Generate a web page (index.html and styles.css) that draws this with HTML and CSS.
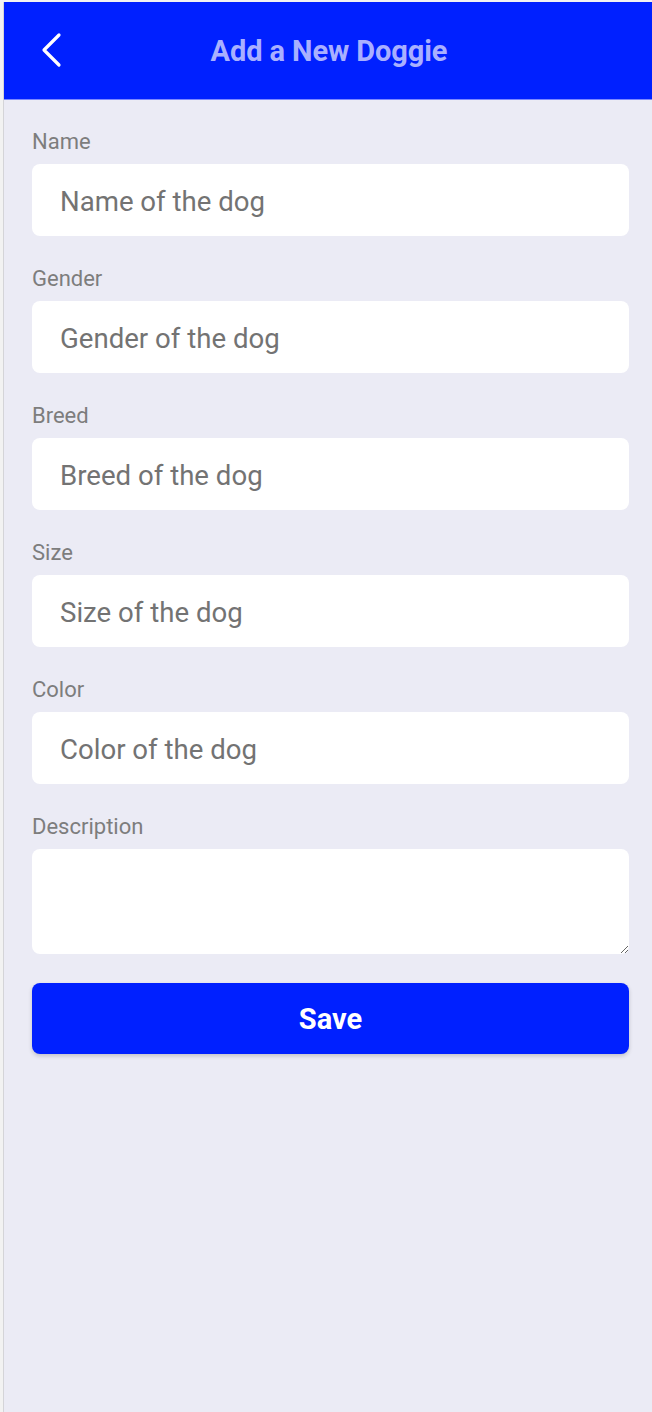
FILE: index.html
```html
<!DOCTYPE html>
<html lang="en">
<head>
<meta charset="utf-8">
<title>Add a New Doggie</title>
<link rel="stylesheet" href="styles.css">
</head>
<body>
<div class="app">
  <header class="topbar">
    <button class="back" aria-label="Back">
      <svg width="24" height="36" viewBox="0 0 24 36"><path d="M19 3 L4 18 L19 33" fill="none" stroke="#fff" stroke-width="3.2" stroke-linecap="round" stroke-linejoin="round"/></svg>
    </button>
    <h1 class="title">Add a New Doggie</h1>
  </header>
  <form class="form">
    <div class="field">
      <label class="label">Name</label>
      <input class="input" type="text" placeholder="Name of the dog">
    </div>
    <div class="field">
      <label class="label">Gender</label>
      <input class="input" type="text" placeholder="Gender of the dog">
    </div>
    <div class="field">
      <label class="label">Breed</label>
      <input class="input" type="text" placeholder="Breed of the dog">
    </div>
    <div class="field">
      <label class="label">Size</label>
      <input class="input" type="text" placeholder="Size of the dog">
    </div>
    <div class="field">
      <label class="label">Color</label>
      <input class="input" type="text" placeholder="Color of the dog">
    </div>
    <div class="field">
      <label class="label">Description</label>
      <textarea class="textarea"></textarea>
    </div>
    <button type="button" class="save">Save</button>
  </form>
</div>
</body>
</html>
```

FILE: styles.css
```css
* { box-sizing: border-box; }
html, body { margin: 0; height: 100%; }
body {
  background: #f2f2f2;
  padding: 2px 0 0 3px;
  font-family: Roboto, "Liberation Sans", sans-serif;
}
.app {
  min-height: 1410px;
  background: #ebebf5;
  border-left: 1px solid #d4d4d8;
}
.topbar {
  height: 98px;
  background: #0020ff;
  border-bottom: 1px solid #7c88ff;
  display: flex;
  align-items: center;
  justify-content: center;
  position: relative;
}
.back {
  position: absolute;
  left: 36px;
  top: 30px;
  background: none;
  border: 0;
  padding: 0;
  width: 24px;
  height: 36px;
}
.back svg { display: block; }
.title {
  margin: 0;
  color: #a9b0ff;
  font-size: 29px;
  font-weight: 700;
  letter-spacing: -0.1px;
  margin-top: 0;
  margin-left: 2px;
}
.form {
  padding: 28px 23px 0 28px;
  display: flex;
  flex-direction: column;
  gap: 29px;
}
.field {
  display: flex;
  flex-direction: column;
  gap: 10px;
}
.label {
  font-size: 22px;
  line-height: 24px;
  padding-top: 2px;
  color: #7d7d7d;
}
.input, .textarea {
  width: 100%;
  border: 0;
  border-radius: 8px;
  background: #fff;
  font-family: Roboto, "Liberation Sans", sans-serif;
  font-size: 27.6px;
  color: #333;
  padding: 2px 28px 0;
  outline: none;
}
.input { height: 72px; }
.input::placeholder { color: #737373; }
.textarea {
  height: 105px;
  padding-top: 12px;
  resize: vertical;
}
.save {
  margin-top: 0;
  height: 71px;
  border: 0;
  border-radius: 8px;
  background: #0020ff;
  color: #fff;
  font-family: Roboto, "Liberation Sans", sans-serif;
  font-size: 29px;
  font-weight: 700;
  box-shadow: 0 2px 4px rgba(0,0,0,0.18);
}
```
